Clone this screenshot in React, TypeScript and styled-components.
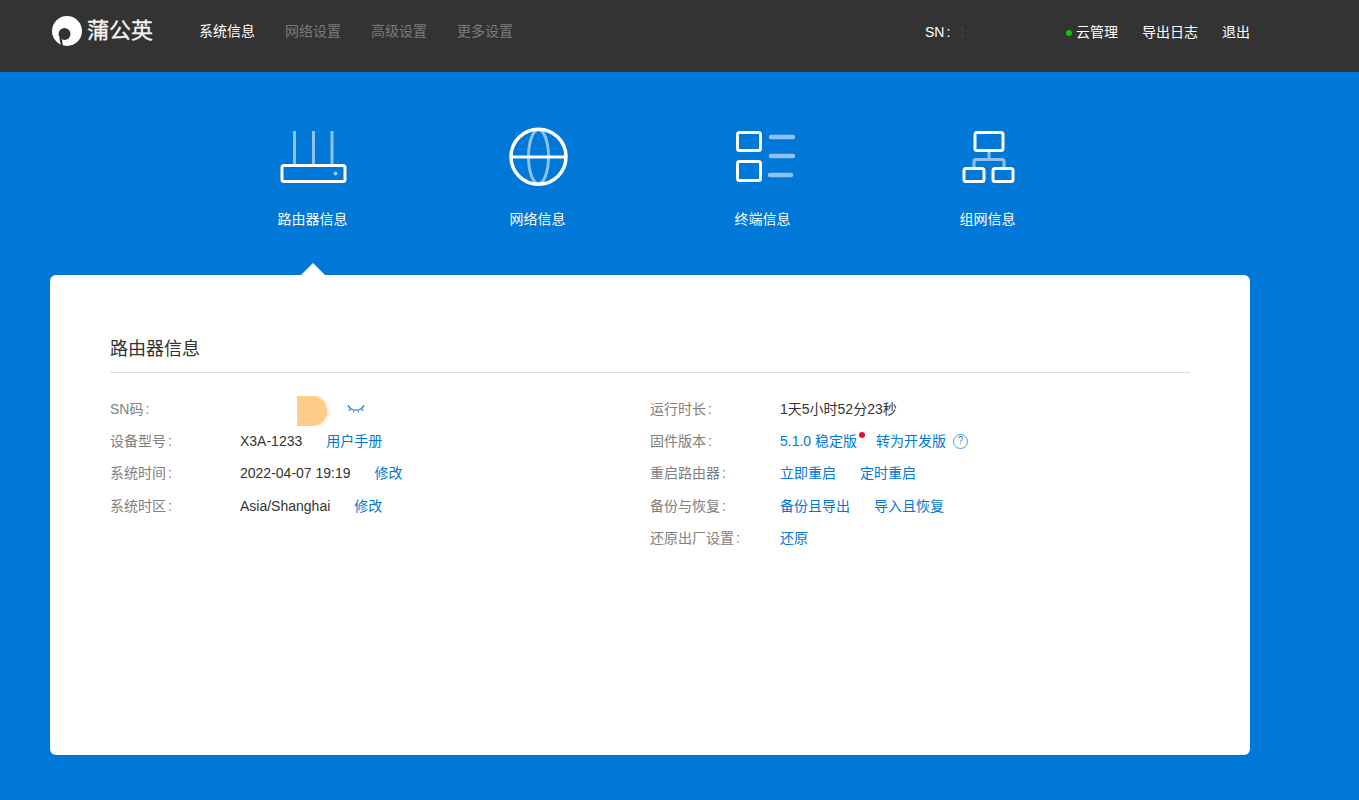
import React from "react";
import styled, { createGlobalStyle } from "styled-components";

const GlobalStyle = createGlobalStyle`
  html, body {
    margin: 0;
    padding: 0;
    background: #0078d7;
    font-family: "Liberation Sans", "Noto Sans CJK SC", sans-serif;
    font-size: 14px;
  }
`;

const leftRows = [
  { label: "设备型号", value: "X3A-1233", links: ["用户手册"] },
  { label: "系统时间", value: "2022-04-07 19:19", links: ["修改"] },
  { label: "系统时区", value: "Asia/Shanghai", links: ["修改"] },
];

const RouterIcon = () => (
  <svg width="68" height="56" viewBox="0 0 68 56" fill="none" stroke="#fff">
    <path d="M15.500 2v34M34.500 2v34M53 2v34" strokeWidth="3" opacity="0.55" />
    <rect x="3" y="36.500" width="63" height="16" rx="2" strokeWidth="3" />
    <circle cx="56.500" cy="44.500" r="2" fill="#fff" stroke="none" opacity="0.6" />
  </svg>
);

const GlobeIcon = () => (
  <svg width="60" height="60" viewBox="0 0 60 60" fill="none" stroke="#fff">
    <ellipse cx="30.500" cy="29.700" rx="10" ry="27" strokeWidth="3" opacity="0.55" />
    <circle cx="30.500" cy="29.700" r="27.500" strokeWidth="3.500" />
    <path d="M3 30h55" strokeWidth="3" />
  </svg>
);

const ListIcon = () => (
  <svg width="66" height="60" viewBox="0 0 66 60" fill="none" stroke="#fff">
    <rect x="7.500" y="5.500" width="23" height="18" rx="2" strokeWidth="3" />
    <rect x="7.500" y="34.500" width="23" height="19" rx="2" strokeWidth="3" />
    <path d="M41 10h22M41 29h22M40 48h21" strokeWidth="4.500" strokeLinecap="round" opacity="0.55" />
  </svg>
);

const TopologyIcon = () => (
  <svg width="54" height="54" viewBox="0 0 54 54" fill="none" stroke="#fff">
    <path d="M28 22v8M13 37v-5.500a2 2 0 0 1 2-2h26a2 2 0 0 1 2 2V37" strokeWidth="3" opacity="0.55" />
    <rect x="14" y="2.500" width="28" height="18" rx="2" strokeWidth="3" />
    <rect x="3" y="38.500" width="20" height="13" rx="2" strokeWidth="3" />
    <rect x="32" y="38.500" width="20" height="13" rx="2" strokeWidth="3" />
  </svg>
);

const Logo = () => (
  <svg width="30" height="30" viewBox="0 0 30 30">
    <circle cx="15" cy="15" r="15" fill="#fff" />
    <circle cx="12.500" cy="18" r="6" fill="#333" />
    <path d="M7.500 21c0 3 .5 5.500 1.500 7.800l2 .6c-.6-1.800-.9-3.500-.8-5.400z" fill="#333" />
  </svg>
);

const tabs = [
  { title: "路由器信息", icon: <RouterIcon />, active: true },
  { title: "网络信息", icon: <GlobeIcon /> },
  { title: "终端信息", icon: <ListIcon /> },
  { title: "组网信息", icon: <TopologyIcon /> },
];

const App = () => {
  return (
    <Page>
      <GlobalStyle />
      <Header>
        <Brand>
          <Logo />
          <BrandName>蒲公英</BrandName>
        </Brand>
        <MainNav>
          <NavItem $active>系统信息</NavItem>
          <NavItem>网络设置</NavItem>
          <NavItem>高级设置</NavItem>
          <NavItem>更多设置</NavItem>
        </MainNav>
        <SerialBox>
          SN<Colon>:</Colon>
          <SerialMask>1</SerialMask>
        </SerialBox>
        <HeaderActions>
          <CloudLink>云管理</CloudLink>
          <HeaderLink>导出日志</HeaderLink>
          <HeaderLink>退出</HeaderLink>
        </HeaderActions>
      </Header>

      <Content>
        <TabBar>
          {tabs.map((tab) => (
            <Tab key={tab.title} $active={tab.active}>
              <TabIcon>{tab.icon}</TabIcon>
              <TabTitle>{tab.title}</TabTitle>
            </Tab>
          ))}
        </TabBar>

        <Card>
          <CardTitle>路由器信息</CardTitle>
          <Columns>
            <Column>
              <Row>
                <Label>
                  SN码<Colon>:</Colon>
                </Label>
                <MaskedValue />
                <EyeIcon viewBox="0 0 18 10" fill="none" stroke="#2f7fd8" strokeWidth="1.2">
                  <path d="M1 1.500l2.500 3c1.500 1.200 3.500 1.700 5.500 1.700s4-.5 5.500-1.700l2.500-3M3.500 4.500L2 7M7 6l-.5 2.500M11 6l.5 2.500M14.500 4.500L16 7" />
                </EyeIcon>
              </Row>
              {leftRows.map((row) => (
                <Row key={row.label}>
                  <Label>
                    {row.label}
                    <Colon>:</Colon>
                  </Label>
                  <Value>{row.value}</Value>
                  {row.links.map((link) => (
                    <ActionLink key={link} $gap={24}>
                      {link}
                    </ActionLink>
                  ))}
                </Row>
              ))}
            </Column>
            <Column>
              <Row>
                <Label>
                  运行时长<Colon>:</Colon>
                </Label>
                <Value>1天5小时52分23秒</Value>
              </Row>
              <Row>
                <Label>
                  固件版本<Colon>:</Colon>
                </Label>
                <VersionLink>5.1.0 稳定版</VersionLink>
                <ActionLink $gap={19}>转为开发版</ActionLink>
                <HelpIcon>?</HelpIcon>
              </Row>
              <Row>
                <Label>
                  重启路由器<Colon>:</Colon>
                </Label>
                <ActionLink>立即重启</ActionLink>
                <ActionLink $gap={24}>定时重启</ActionLink>
              </Row>
              <Row>
                <Label>
                  备份与恢复<Colon>:</Colon>
                </Label>
                <ActionLink>备份且导出</ActionLink>
                <ActionLink $gap={24}>导入且恢复</ActionLink>
              </Row>
              <Row>
                <Label>
                  还原出厂设置<Colon>:</Colon>
                </Label>
                <ActionLink>还原</ActionLink>
              </Row>
            </Column>
          </Columns>
        </Card>
      </Content>
    </Page>
  );
};

const Page = styled.div`
  min-height: 800px;
  background: #0078d7;
`;

const Header = styled.header`
  display: flex;
  align-items: center;
  height: 72px;
  padding: 0 108px 12px 50px;
  box-sizing: border-box;
  background: #333333;
  color: #fff;
`;

const Brand = styled.div`
  display: flex;
  align-items: center;
  gap: 5px;
  width: 147px;
  margin-top: 2px;
  margin-left: 2px;
`;

const BrandName = styled.span`
  font-size: 22px;
  line-height: 30px;
  color: #f4f4f4;
  -webkit-text-stroke: 0.3px #f4f4f4;
`;

const MainNav = styled.nav`
  display: flex;
  gap: 30px;
`;

const NavItem = styled.a<{ $active?: boolean }>`
  font-size: 14px;
  color: ${(props) => (props.$active ? "#ffffff" : "#7b7b7b")};
`;

const SerialBox = styled.div`
  display: flex;
  margin-left: 412px;
  width: 151px;
  margin-top: 4px;
`;

const Colon = styled.span`
  margin-left: 2px;
`;

const SerialMask = styled.span`
  margin-left: 8px;
  color: #414141;
  filter: blur(0.6px);
`;

const HeaderActions = styled.div`
  display: flex;
  gap: 24px;
  margin-top: 2px;
`;

const HeaderLink = styled.a`
  color: #fff;
  font-size: 14px;
`;

const CloudLink = styled(HeaderLink)`
  position: relative;
  &::before {
    content: "";
    position: absolute;
    left: -10px;
    top: 9px;
    width: 6px;
    height: 6px;
    border-radius: 50%;
    background: #0cc40c;
  }
`;

const Content = styled.main`
  width: 1200px;
  margin-left: 50px;
`;

const TabBar = styled.div`
  display: flex;
  justify-content: center;
  height: 203px;
`;

const Tab = styled.div<{ $active?: boolean }>`
  position: relative;
  display: flex;
  flex-direction: column;
  align-items: center;
  width: 225px;
  color: #fff;
  ${(props) =>
    props.$active
      ? `&::after {
    content: "";
    position: absolute;
    left: 50%;
    bottom: 0;
    margin-left: -12px;
    border-left: 12px solid transparent;
    border-right: 12px solid transparent;
    border-bottom: 12px solid #fff;
  }`
      : ""}
`;

const TabIcon = styled.div`
  display: flex;
  align-items: center;
  justify-content: center;
  height: 60px;
  margin-top: 55px;
  filter: blur(0.45px);
`;

const TabTitle = styled.div`
  margin-top: 22px;
  font-size: 14px;
  line-height: 20px;
`;

const Card = styled.section`
  height: 480px;
  padding: 57px 60px 0;
  box-sizing: border-box;
  background: #fff;
  border-radius: 6px;
`;

const CardTitle = styled.h2`
  margin: 0;
  height: 40px;
  border-bottom: 1px solid #dddddd;
  font-size: 18px;
  font-weight: 400;
  line-height: 35px;
  color: #333;
`;

const Columns = styled.div`
  display: grid;
  grid-template-columns: 540px 1fr;
  padding-top: 19.85px;
`;

const Column = styled.div`
  display: flex;
  flex-direction: column;
`;

const Row = styled.div`
  display: flex;
  align-items: baseline;
  height: 32.25px;
  line-height: 32.25px;
  font-size: 14px;
`;

const Label = styled.span`
  width: 130px;
  flex-shrink: 0;
  color: #808080;
`;

const Value = styled.span`
  color: #333;
`;

const ActionLink = styled.a<{ $gap?: number }>`
  margin-left: ${(props) => props.$gap ?? 0}px;
  color: #0078d7;
`;

const VersionLink = styled(ActionLink)`
  position: relative;
  &::after {
    content: "";
    position: absolute;
    right: -8px;
    top: 7px;
    width: 6px;
    height: 6px;
    border-radius: 50%;
    background: #f0033a;
  }
`;

const HelpIcon = styled.span`
  display: flex;
  align-self: center;
  align-items: center;
  justify-content: center;
  width: 13px;
  height: 13px;
  margin-left: 7px;
  border: 1px solid #4a9be0;
  border-radius: 50%;
  font-size: 10px;
  line-height: 1;
  color: #2b8ade;
`;

const MaskedValue = styled.span`
  align-self: flex-start;
  width: 30px;
  height: 30px;
  margin: 3.150px 0 0 57px;
  background: #ffcc8a;
  border-radius: 0 15px 15px 0;
  box-shadow: 0 0 4px #ffcc8a;
  clip-path: inset(0 -8px 0 0);
`;

const EyeIcon = styled.svg`
  align-self: center;
  width: 18px;
  height: 10px;
  margin-left: 20px;
`;

export default App;
